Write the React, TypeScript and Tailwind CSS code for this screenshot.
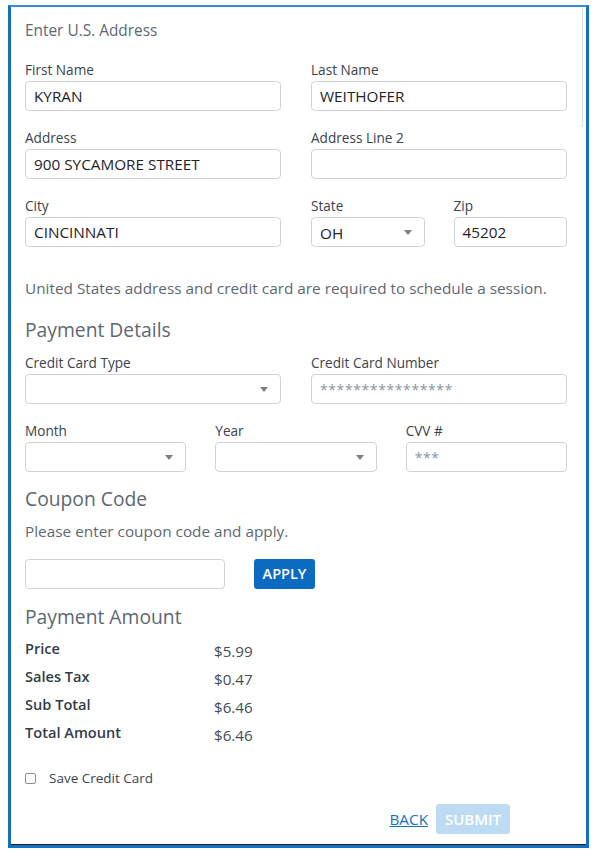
import React from "react";

const font = "font-['Open_Sans',_'Liberation_Sans',_sans-serif]";

function Label({ children }: { children: React.ReactNode }) {
    return <div className="h-[18px] leading-[18px] text-[13.6px] text-[#3a434d] mb-[2px]">{children}</div>;
}

function TextBox({ value, placeholder }: { value?: string; placeholder?: string }) {
    return (
        <div className="h-[30px] rounded-[4px] border border-[#cfd3d7] bg-white flex items-center px-[8px] text-[15.3px]">
            {value ? (
                <span className="text-[#1f2328]">{value}</span>
            ) : (
                <span className="text-[#8a96a3] text-[14px] tracking-[0.6px]">{placeholder}</span>
            )}
        </div>
    );
}

function SelectBox({ value }: { value?: string }) {
    return (
        <div className="h-[30px] rounded-[4px] border border-[#cfd3d7] bg-white flex items-center justify-between pl-[8px] pr-[12px] text-[15.3px] text-[#1f2328]">
            <span className="pt-[2px]">{value}</span>
            <svg width="8" height="5" viewBox="0 0 8 5">
                <path d="M0 0 H8 L4 5 Z" fill="#7a7f85" />
            </svg>
        </div>
    );
}

function Field({ label, children }: { label: string; children: React.ReactNode }) {
    return (
        <div>
            <Label>{label}</Label>
            {children}
        </div>
    );
}

const amounts = [
    { label: "Price", value: "$5.99" },
    { label: "Sales Tax", value: "$0.47" },
    { label: "Sub Total", value: "$6.46" },
    { label: "Total Amount", value: "$6.46" },
];

export default function App() {
    return (
        <div className={`w-[594px] h-[855px] bg-white pt-[5px] pl-[8px] ${font}`}>
            <div className="relative w-[581px] h-[843px] border-l-[3px] border-r-[3px] border-t-2 border-b-[3px] border-[#1670c2] border-t-[#3a8bd6]">
                {/* scrollbar track hint */}
                <div className="absolute right-[3px] top-0 w-[2px] h-[120px] rounded-b-full border-r border-b border-[#dcdfe2]" />

                <div className="h-full border-b border-[#1b1f24] pl-[14px] pr-[19px] pt-[14px]">
                    <div className="h-[20px] leading-[20px] text-[15.4px] text-[#5d6872]">Enter U.S. Address</div>

                    <div className="grid grid-cols-2 gap-x-[30px] gap-y-[18px] mt-[20px]">
                        <Field label="First Name">
                            <TextBox value="KYRAN" />
                        </Field>
                        <Field label="Last Name">
                            <TextBox value="WEITHOFER" />
                        </Field>
                        <Field label="Address">
                            <TextBox value="900 SYCAMORE STREET" />
                        </Field>
                        <Field label="Address Line 2">
                            <TextBox />
                        </Field>
                        <Field label="City">
                            <TextBox value="CINCINNATI" />
                        </Field>
                        <div className="grid grid-cols-2 gap-x-[29px]">
                            <Field label="State">
                                <SelectBox value="OH" />
                            </Field>
                            <Field label="Zip">
                                <TextBox value="45202" />
                            </Field>
                        </div>
                    </div>

                    <div className="mt-[31px] h-[20px] leading-[20px] text-[15.35px] text-[#5d6872]">
                        United States address and credit card are required to schedule a session.
                    </div>

                    <div className="mt-[19px] h-[26px] leading-[26px] text-[19.3px] text-[#5d6872]">Payment Details</div>

                    <div className="grid grid-cols-2 gap-x-[30px] mt-[11px]">
                        <Field label="Credit Card Type">
                            <SelectBox />
                        </Field>
                        <Field label="Credit Card Number">
                            <TextBox placeholder="****************" />
                        </Field>
                    </div>

                    <div className="grid grid-cols-3 gap-x-[29px] mt-[18px]">
                        <Field label="Month">
                            <SelectBox />
                        </Field>
                        <Field label="Year">
                            <SelectBox />
                        </Field>
                        <Field label="CVV #">
                            <TextBox placeholder="***" />
                        </Field>
                    </div>

                    <div className="mt-[14px] h-[26px] leading-[26px] text-[19.3px] text-[#5d6872]">Coupon Code</div>
                    <div className="mt-[9px] h-[20px] leading-[20px] text-[15.35px] text-[#5d6872]">
                        Please enter coupon code and apply.
                    </div>

                    <div className="flex items-center gap-[29px] mt-[18px]">
                        <div className="w-[200px]">
                            <TextBox />
                        </div>
                        <button className="h-[30px] w-[61px] rounded-[3px] bg-[#0b6bc0] text-white text-[14.5px] font-semibold">
                            APPLY
                        </button>
                    </div>

                    <div className="mt-[15px] h-[26px] leading-[26px] text-[19.3px] text-[#5d6872]">Payment Amount</div>

                    <div className="mt-[5px]">
                        {amounts.map((row) => (
                            <div key={row.label} className="flex h-[28px] items-center">
                                <div className="w-[189px] text-[14.6px] font-semibold text-[#333c48]">{row.label}</div>
                                <div className="text-[15.2px] text-[#454d56] pt-[4px]">{row.value}</div>
                            </div>
                        ))}
                    </div>

                    <label className="mt-[21px] flex items-center h-[20px] gap-[13px]">
                        <span className="w-[11px] h-[11px] rounded-[2px] border border-[#8a8f94] bg-white" />
                        <span className="text-[13.5px] text-[#3a434d]">Save Credit Card</span>
                    </label>

                    <div className="flex justify-end items-center gap-[8px] mt-[16px] pr-[57px]">
                        <a className="text-[15.3px] text-[#1670c2] underline">BACK</a>
                        <button className="h-[30px] w-[74px] rounded-[3px] bg-[#bddcf3] text-white text-[15px] font-semibold">
                            SUBMIT
                        </button>
                    </div>
                </div>
            </div>
        </div>
    );
}
